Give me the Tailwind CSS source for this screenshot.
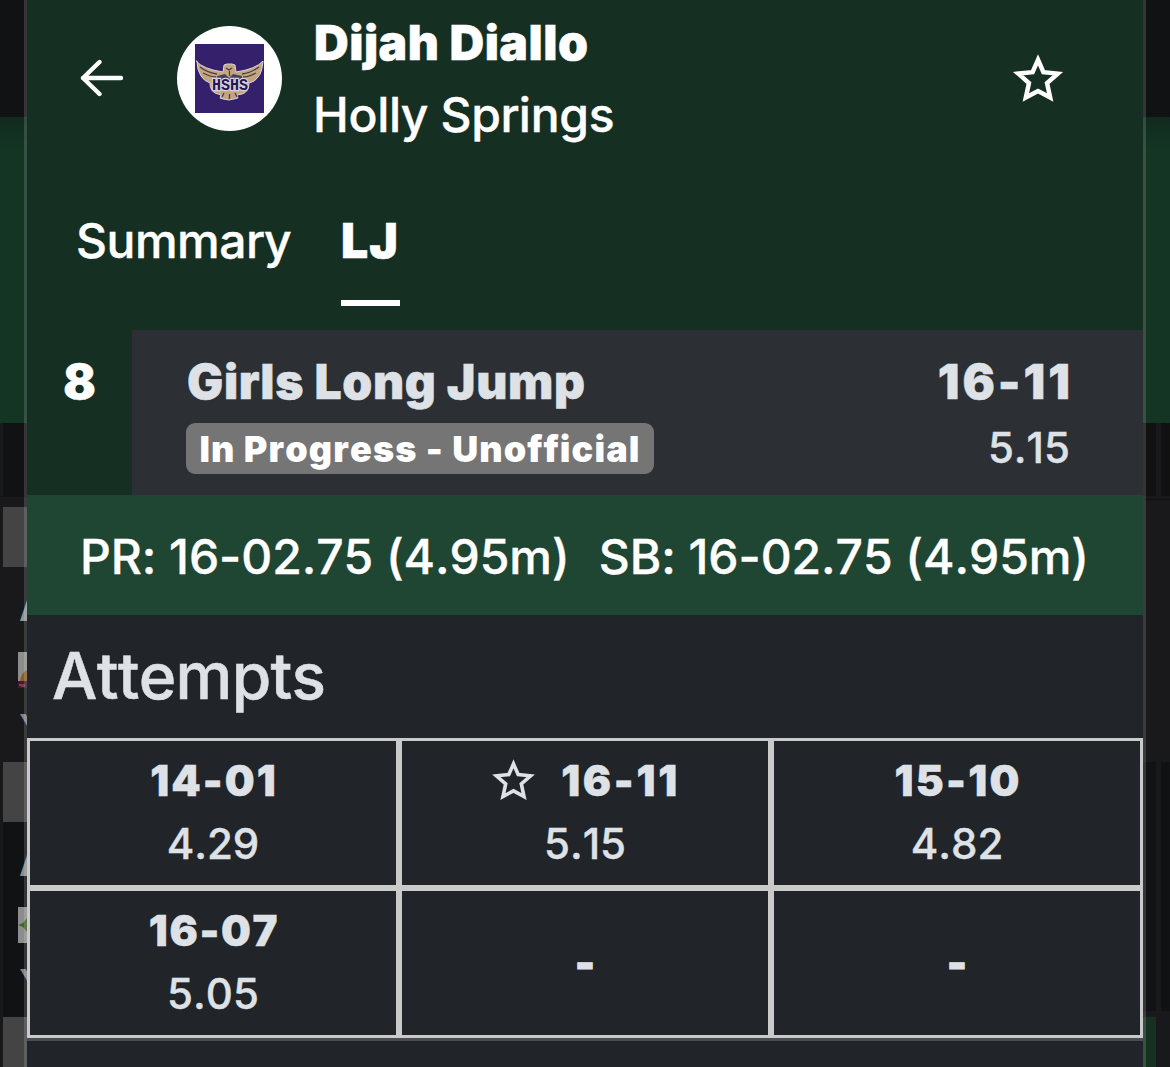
<!DOCTYPE html>
<html lang="en">
<head>
<meta charset="utf-8">
<title>Dijah Diallo</title>
<script src="https://cdn.jsdelivr.net/npm/@tailwindcss/browser@4"></script>
</head>
<body class="relative h-[1067px] w-[1170px] overflow-hidden bg-[#19191b] font-['Inter',sans-serif] text-[#dee2e6] [font-kerning:none]">
  <!-- dimmed page behind the dialog -->
  <div class="absolute inset-0 flex justify-between" aria-hidden="true">
    <div class="flex w-[27px] flex-col overflow-hidden">
      <div class="h-[117px] shrink-0 bg-[#111214]"></div>
      <div class="h-[306px] shrink-0 bg-[#143424] bg-linear-to-b from-[#112a1f] to-[#143424] to-10%"></div>
      <div class="h-[73px] shrink-0 border-l-[3px] border-[#1a1a1b] bg-[#111213]"></div>
      <div class="h-[11px] shrink-0 border-t border-[#111213] bg-[#19191b]"></div>
      <div class="ml-[3px] h-[60px] shrink-0 bg-[#454444]"></div>
      <div class="flex h-[195px] shrink-0 flex-col pl-[18px]">
        <div class="mt-[11px] h-[60px] pl-px text-[42px] leading-[56px] font-bold text-[#929394]">A</div>
        <svg class="mt-[14px] h-9 w-[9px] shrink-0" viewBox="0 0 9 36"><path fill="#8d8d8e" d="M0 0h9v36H0z"/><path fill="#84612b" d="M2 29q1-8 7-11v11z"/><path fill="#47192a" d="M0 29h9v7H0z"/><path stroke="#94727d" d="M1 33h2M4 32v3M6 32v3"/></svg>
        <div class="mt-[12px] pl-[1px] text-[42px] leading-[60px] font-medium text-[#828384]">Y</div>
      </div>
      <div class="ml-[3px] h-[60px] shrink-0 bg-[#454444]"></div>
      <div class="flex h-[195px] shrink-0 flex-col border-l-[3px] border-[#19191b] bg-[#111213] pl-[15px]">
        <div class="mt-[11px] h-[60px] pl-px text-[42px] leading-[56px] font-bold text-[#8c8d8e]">A</div>
        <svg class="mt-[14px] h-9 w-[9px] shrink-0" viewBox="0 0 9 36"><path fill="#8d8d8e" d="M0 0h9v36H0z"/><path fill="#3f6428" d="M0 18l5-2 4-5v14l-4-5z"/></svg>
        <div class="mt-[12px] pl-[1px] text-[42px] leading-[60px] font-medium text-[#828384]">Y</div>
      </div>
      <div class="ml-[3px] h-[50px] shrink-0 bg-[#454444]"></div>
    </div>
    <div class="flex w-[27px] flex-col overflow-hidden">
      <div class="h-[117px] shrink-0 bg-[#111214]"></div>
      <div class="h-[306px] shrink-0 bg-[#143424] bg-linear-to-b from-[#112a1f] to-[#143424] to-10%"></div>
      <div class="flex h-[73px] shrink-0 bg-[#111112]"><div class="ml-[13px] w-[5px] bg-[#19191b]"></div></div>
      <div class="h-[4px] shrink-0 border-b border-[#111112] bg-[#19191b]"></div>
      <div class="h-[262px] shrink-0 bg-[#19191b]"></div>
      <div class="flex h-[249px] shrink-0 bg-[#111213]"><div class="ml-[13px] w-[5px] bg-[#19191b]"></div></div>
      <div class="h-[6px] shrink-0 bg-[#19191b]"></div>
      <div class="h-[50px] w-[13px] shrink-0 bg-[#163121]"></div>
    </div>
  </div>

  <!-- athlete dialog -->
  <main class="relative mx-[24px] flex h-full flex-col border-x-[3px] border-white/15 bg-[#212429] bg-clip-padding">
    <header class="h-[330px] shrink-0 bg-[#153022] text-white">
      <div class="flex h-[156px] items-center">
        <svg class="ml-[53px] h-[38px] w-[44px]" viewBox="0 0 44 38" fill="none" stroke="#fff" stroke-width="4.4" stroke-linecap="round" stroke-linejoin="round"><path d="M41 19H3M19.500 3 3 19l16.500 16"/></svg>
        <div class="ml-[53px] flex size-[105px] items-center justify-center rounded-full bg-white">
          <svg class="size-[69px]" viewBox="0 0 69 69">
            <path fill="#35206b" d="M0 0h69v69H0z"/>
            <path fill="#c3a67d" stroke="#d8d2dc" stroke-width="1" d="M1 17q7 8 27 11l1-7 3-1h5l3 1 1 7q20-3 27-11-1 12-5 16-3 5-9 6 0 9-7 11l-5 1 1 3-4 1-5 1-6-1-3-1 1-3-6-2q-5-3-5-10-6-2-9-7-4-6-4-15z"/>
            <path stroke="#4b3b50" stroke-width="1.300" fill="none" d="M5 23q8 6 17 7M8 29q8 4 13 4M64 23q-8 6-17 7M61 29q-8 4-13 4M31 24l3 2 3-2M34.500 27v5M29 49l-2 4M34.500 50v5M40 49l2 4"/>
            <path fill="#49415b" d="M22 32l8-2 4 4 4-4 9 2v4H22z"/>
            <text x="35" y="46" text-anchor="middle" textLength="36" lengthAdjust="spacingAndGlyphs" font-family="Liberation Mono" font-weight="700" font-size="16.500" fill="#24164f" stroke="#d9d4e4" stroke-width="2.400" paint-order="stroke">HSHS</text>
          </svg>
        </div>
        <div class="ml-[32px] flex flex-col pt-[2px] whitespace-nowrap text-[48px] leading-[72px]">
          <h1 class="font-black tracking-[0.5px] [-webkit-text-stroke:0.5px]">Dijah Diallo</h1>
          <p class="-ml-px font-medium tracking-[-0.3px] [-webkit-text-stroke:0.4px]">Holly Springs</p>
        </div>
        <svg class="mt-[2px] mr-[79px] ml-auto size-[52px]" viewBox="0 0 50 50" fill="none" stroke="#fff" stroke-width="4.300"><path d="M25 6.500 30.200 18.400 44 19.800 33.700 28.800 36.700 42.800 25 36.500 13.300 42.800 16.300 28.800 6 19.800 19.800 18.400z"/></svg>
      </div>
      <nav class="mt-[50px] flex text-[48px] leading-[70px]">
        <span class="ml-[49px] w-[215px] font-medium tracking-[-0.5px] [-webkit-text-stroke:0.4px]">Summary</span>
        <span class="ml-[50px] h-[100px] w-[59px] border-b-[6px] border-white font-black tracking-[1px] [-webkit-text-stroke:0.5px]">LJ</span>
      </nav>
    </header>

    <section class="flex h-[165px] shrink-0 bg-[#153022]">
      <div class="w-[105px] pt-[17px] text-center text-[48px] leading-[70px] font-black text-white [-webkit-text-stroke:0.5px]">8</div>
      <div class="flex flex-1 justify-between bg-[#2c2f34] pt-[17px] pr-[73px] pl-[54px] whitespace-nowrap">
        <div>
          <h2 class="h-[72px] pl-px text-[48px] leading-[70px] font-black tracking-[0.7px] [-webkit-text-stroke:0.5px]">Girls Long Jump</h2>
          <div class="mt-[4px] flex h-[51px] w-[468px] items-center justify-center rounded-[9px] bg-[#757575] text-[36px] font-black tracking-[1.1px] text-white">In Progress - Unofficial</div>
        </div>
        <div class="text-right">
          <div class="-mr-[3px] h-[72px] text-[48px] leading-[70px] font-black tracking-[3px] [-webkit-text-stroke:0.5px]">16-11</div>
          <div class="text-[42px] leading-[58px] font-medium [-webkit-text-stroke:0.4px]">5.15</div>
        </div>
      </div>
    </section>

    <section class="flex h-[120px] shrink-0 items-center justify-between bg-[#1f4632] pt-[3px] pr-[54px] pl-[53px] text-[48px] font-medium tracking-[-0.05px] whitespace-nowrap text-white [-webkit-text-stroke:0.4px]">
      <span>PR: 16-02.75 (4.95m)</span><span>SB: 16-02.75 (4.95m)</span>
    </section>

    <h2 class="h-[123px] shrink-0 pl-[25px] text-[64px] leading-[122px] font-medium tracking-[-0.75px] [-webkit-text-stroke:0.5px]">Attempts</h2>

    <section class="grid h-[300px] shrink-0 grid-cols-3 grid-rows-2 gap-[6px] border-[3px] border-[#cacacb] bg-[#cacacb] text-center text-[42px] leading-[63px] font-medium [-webkit-text-stroke:0.4px]">
      <div class="bg-[#212429] pt-[8px]"><div class="pl-[2px] font-black tracking-[2px]">14-01</div><div>4.29</div></div>
      <div class="bg-[#212429] pt-[8px]">
        <div class="flex items-center justify-center gap-[25px] pl-px font-black">
          <svg class="size-[45px]" viewBox="0 0 50 50" fill="none" stroke="currentColor" stroke-width="4"><path d="M25 6.500 30.200 18.400 44 19.800 33.700 28.800 36.700 42.800 25 36.500 13.300 42.800 16.300 28.800 6 19.800 19.800 18.400z"/></svg>
          <span class="tracking-[2.7px]">16-11</span>
        </div>
        <div>5.15</div>
      </div>
      <div class="bg-[#212429] pt-[8px]"><div class="pl-[2px] font-black tracking-[2.3px]">15-10</div><div>4.82</div></div>
      <div class="bg-[#212429] pt-[8px]"><div class="pl-[2px] font-black tracking-[1.7px]">16-07</div><div>5.05</div></div>
      <div class="flex items-center justify-center bg-[#212429] pb-px font-black [-webkit-text-stroke:1.2px]">-</div>
      <div class="flex items-center justify-center bg-[#212429] pb-px font-black [-webkit-text-stroke:1.2px]">-</div>
    </section>
    <div class="h-[3px] shrink-0 bg-[#4b4d53]"></div>
  </main>
</body>
</html>
